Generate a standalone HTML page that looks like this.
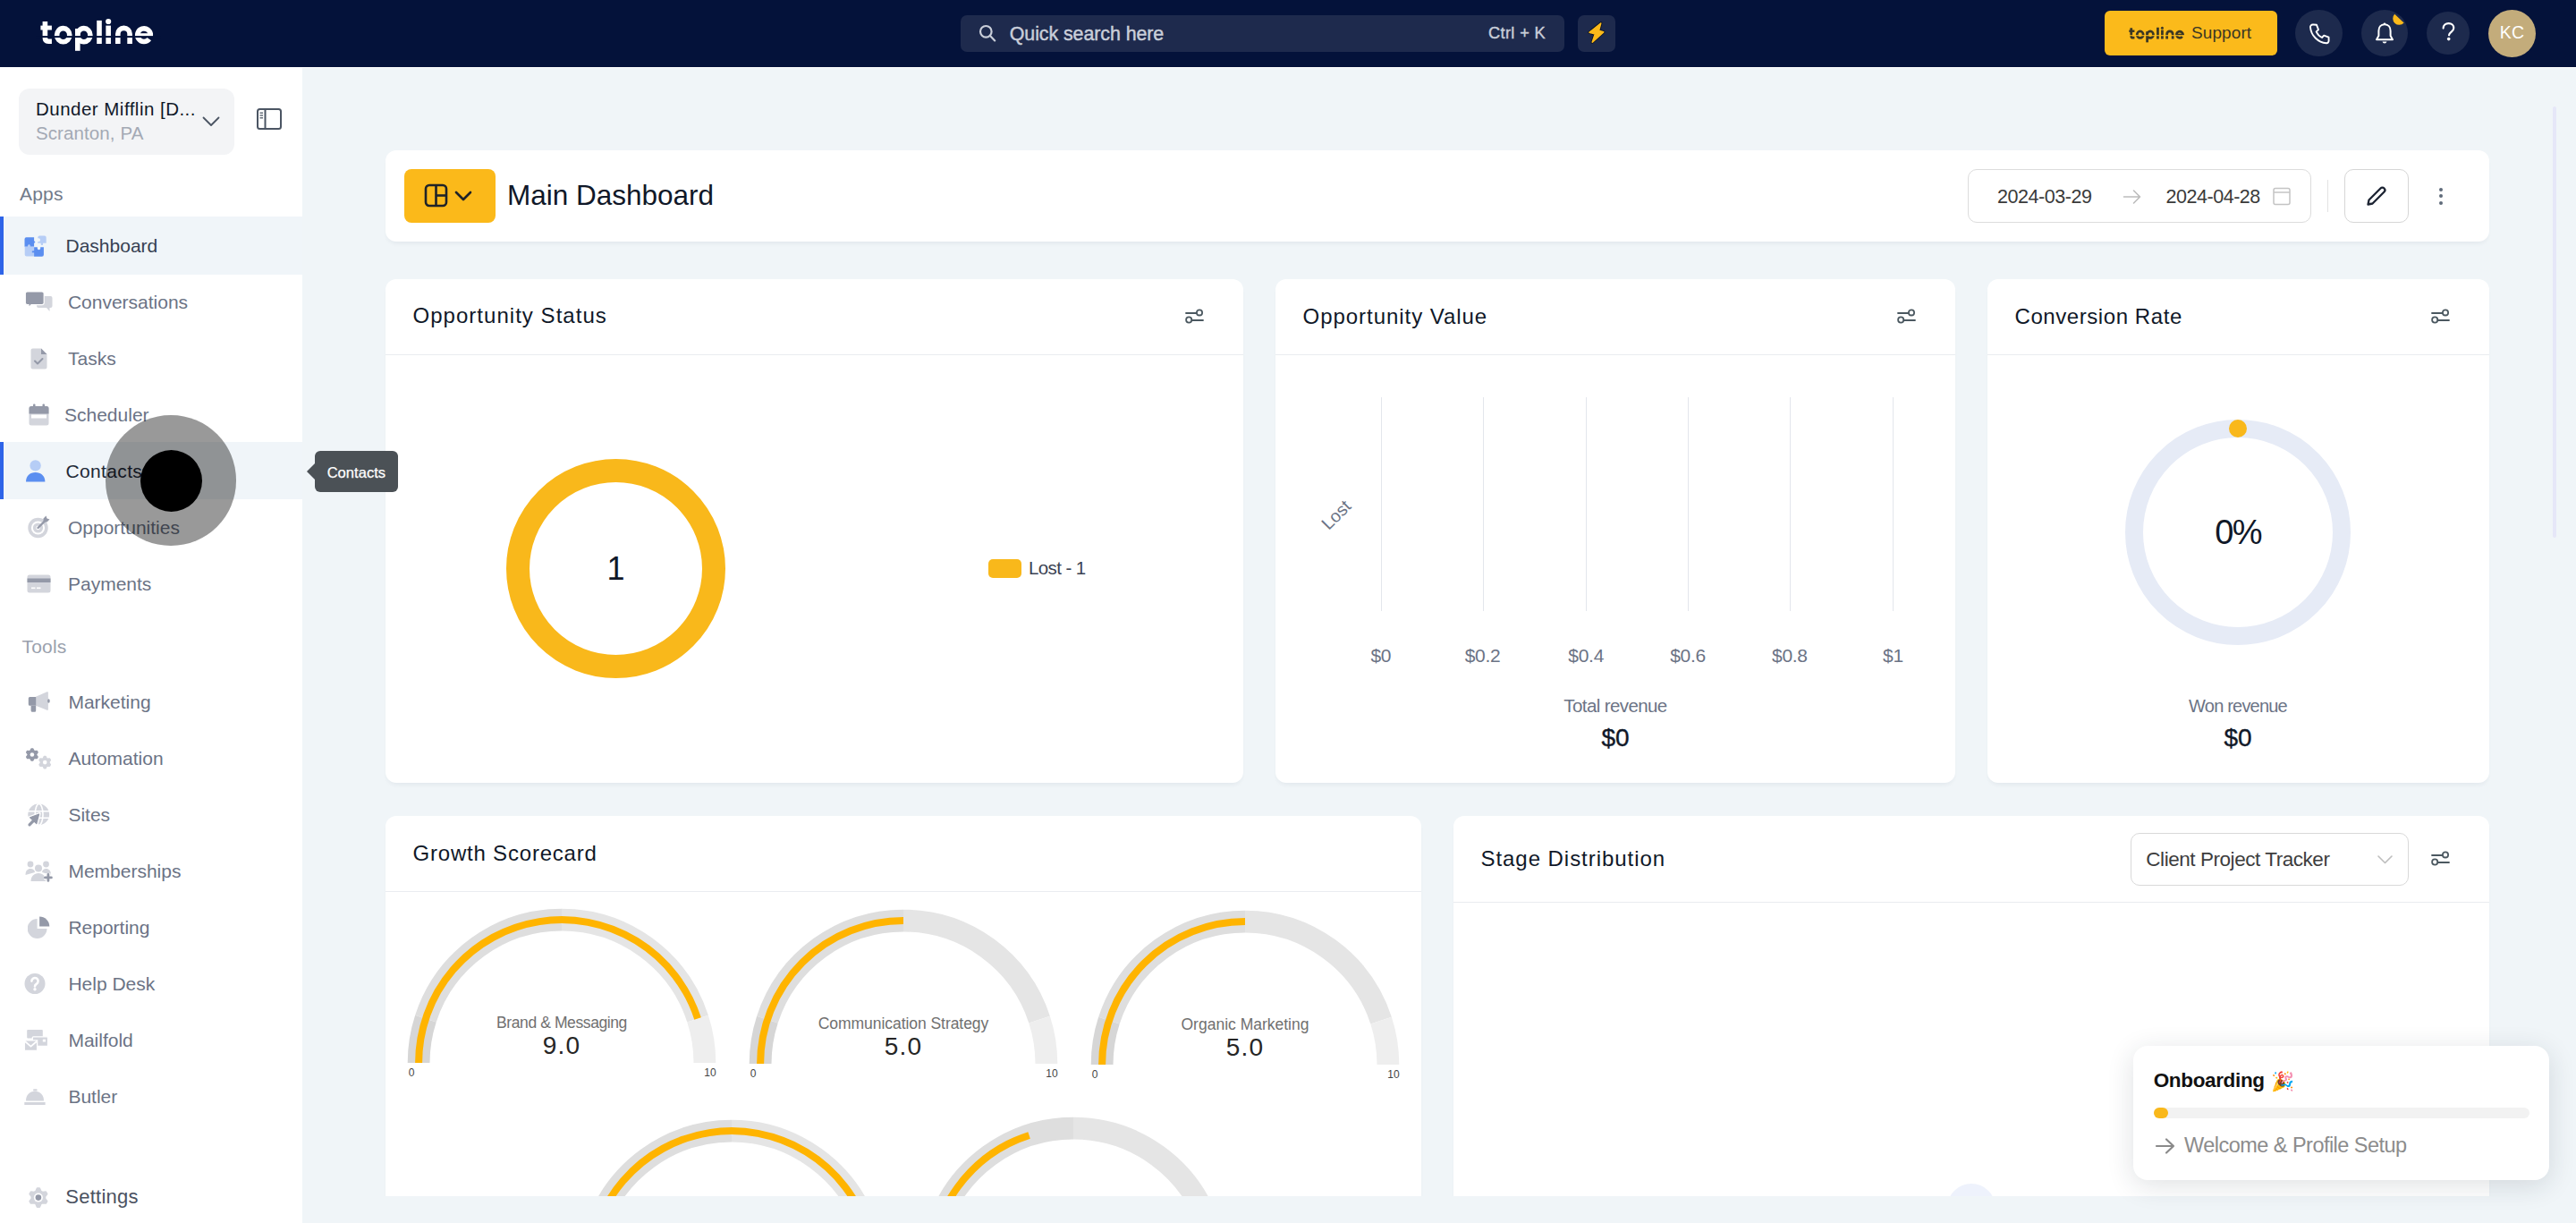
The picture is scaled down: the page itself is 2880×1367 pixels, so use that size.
<!DOCTYPE html>
<html><head><meta charset="utf-8"><style>
html,body{margin:0;padding:0;}
body{width:2880px;height:1367px;overflow:hidden;position:relative;background:#f0f5f8;font-family:"Liberation Sans",sans-serif;}
.t{position:absolute;white-space:nowrap;}
.b{position:absolute;}
</style></head><body>
<div class="b" style="left:0px;top:0px;width:2880px;height:75px;background:#04123a"></div>
<svg class="b" style="left:40px;top:15px" width="140" height="50" viewBox="0 0 140 50"><g transform="translate(-40,-15)"><g fill="none" stroke="#fff" stroke-width="5.6"><path d="M50.4 24 V42.6 Q50.4 46.2 54 46.2 H57.9"/><ellipse cx="70.7" cy="39.2" rx="7.1" ry="7.6"/><ellipse cx="93.8" cy="39.2" rx="7.1" ry="7.6"/><path d="M86.8 32 V56.8"/><path d="M111 22.9 V49"/><path d="M121.15 28.6 V49"/><path d="M131.8 49 V38 A6.65 6.65 0 0 1 145.1 38 V49"/><path d="M168.3 39.2 A7.3 7.3 0 1 0 166.8 43.6"/><path d="M153 39.4 H171" stroke-width="4.4"/></g><g fill="#fff"><rect x="45.4" y="28.6" width="12.5" height="4.9"/><circle cx="121.15" cy="24" r="3.1"/></g><rect x="40" y="40.1" width="140" height="2" fill="#04123a"/></g></svg>
<div class="b" style="left:1074px;top:17px;width:675px;height:41px;background:#1e2a4d;border-radius:7px"></div>
<svg class="b" style="left:1094px;top:27px" width="22" height="22" viewBox="0 0 22 22"><circle cx="8.3" cy="8.3" r="6.3" fill="none" stroke="#c9ced9" stroke-width="2.2"/><line x1="13" y1="13" x2="18.2" y2="18.4" stroke="#c9ced9" stroke-width="2.2" stroke-linecap="round"/></svg>
<div class="t" style="left:1128.80px;top:27.88px;font-size:21.4px;line-height:21.4px;color:#c9ced9;font-weight:400;letter-spacing:-0.07px;-webkit-text-stroke:0.45px #c9ced9;">Quick search here</div>
<div class="t" style="right:1152.00px;text-align:right;top:28.49px;font-size:18.2px;line-height:18.2px;color:#c9ced9;font-weight:400;letter-spacing:0.35px;-webkit-text-stroke:0.4px #c9ced9;">Ctrl + K</div>
<div class="b" style="left:1764px;top:17px;width:42px;height:41px;background:#1e2a4d;border-radius:7px"></div>
<svg class="b" style="left:1770px;top:20px" width="30" height="34" viewBox="0 0 30 34"><path d="M19.7 6 L7.1 16.2 L13.3 18.1 L10.3 27.1 L22.7 15.8 L17.5 14.3 Z" fill="#0b1226" stroke="#0b1226" stroke-width="3.4" stroke-linejoin="round"/><path d="M19.7 6 L7.1 16.2 L13.3 18.1 L10.3 27.1 L22.7 15.8 L17.5 14.3 Z" fill="#fbb91a" stroke="#fbb91a" stroke-width="1.6" stroke-linejoin="round"/></svg>
<div class="b" style="left:2353px;top:12px;width:193px;height:50px;background:#fbba1b;border-radius:6px"></div>
<svg class="b" style="left:2376px;top:26px" width="72" height="24" viewBox="0 0 72 24"><g transform="translate(4.3,3.8) scale(0.49) translate(-45.4,-21)"><g fill="none" stroke="#3b3724" stroke-width="5.6"><path d="M50.4 24 V42.6 Q50.4 46.2 54 46.2 H57.9"/><ellipse cx="70.7" cy="39.2" rx="7.1" ry="7.6"/><ellipse cx="93.8" cy="39.2" rx="7.1" ry="7.6"/><path d="M86.8 32 V56.8"/><path d="M111 22.9 V49"/><path d="M121.15 28.6 V49"/><path d="M131.8 49 V38 A6.65 6.65 0 0 1 145.1 38 V49"/><path d="M168.3 39.2 A7.3 7.3 0 1 0 166.8 43.6"/><path d="M153 39.4 H171" stroke-width="4.4"/></g><g fill="#3b3724"><rect x="45.4" y="28.6" width="12.5" height="4.9"/><circle cx="121.15" cy="24" r="3.1"/></g><rect x="40" y="40.1" width="140" height="2.2" fill="#fbba1b"/></g></svg>
<div class="t" style="left:2450.00px;top:27.02px;font-size:19px;line-height:19px;color:#3b3724;font-weight:400;letter-spacing:0.1px;">Support</div>
<div class="b" style="left:2566.3px;top:10.8px;width:52.4px;height:52.4px;border-radius:50%;background:#1d2a4d"></div>
<div class="b" style="left:2640px;top:11px;width:52px;height:52px;border-radius:50%;background:#1d2a4d"></div>
<div class="b" style="left:2712.8px;top:12.599999999999998px;width:48.4px;height:48.4px;border-radius:50%;background:#1d2a4d"></div>
<svg class="b" style="left:2580px;top:25px" width="26" height="26" viewBox="0 0 26 26"><path d="M6.5 2.5 L10 2.8 L12 8.2 L9.6 10.4 C11 13.4 13 15.6 16 17 L18.2 14.6 L23.5 16.6 L23.6 20.6 C23.6 22 22.4 23.4 21 23.3 C11.6 22.6 3.6 14.6 3 5.2 C2.9 3.8 4.2 2.5 5.6 2.5 Z" fill="none" stroke="#ffffff" stroke-width="1.9" stroke-linejoin="round"/></svg>
<svg class="b" style="left:2653px;top:24px" width="26" height="28" viewBox="0 0 26 28"><path d="M13 3.2 C8.6 3.2 6.4 6.6 6.4 10.6 V16 L4 20.2 H22 L19.6 16 V10.6 C19.6 6.6 17.4 3.2 13 3.2 Z" fill="none" stroke="#ffffff" stroke-width="2" stroke-linejoin="round"/><path d="M10.5 22.6 A2.6 2.6 0 0 0 15.5 22.6 Z" fill="#ffffff"/><circle cx="13" cy="2.6" r="1.2" fill="#fff"/></svg>
<svg class="b" style="left:2674px;top:13px" width="16" height="16" viewBox="0 0 16 16"><path d="M3.2 2.8 L13.6 12.6 A6.2 6.2 0 0 1 3.2 2.8 Z" fill="#fbb91a" transform="rotate(0)"/></svg>
<svg class="b" style="left:2725px;top:20px" width="26" height="30" viewBox="0 0 26 30"><path d="M6.6 11.6 C6.6 8.2 9.2 6.1 12.6 6.1 C16 6.1 18.3 8.3 18.3 11.3 C18.3 14.4 15.2 15.4 13.7 17.6 L13 19.3" fill="none" stroke="#fff" stroke-width="2.1" stroke-linecap="round"/><circle cx="12.7" cy="23.6" r="1.8" fill="#fff"/></svg>
<div class="b" style="left:2781.5px;top:10.5px;width:53px;height:53px;border-radius:50%;background:#c3ac7b"></div>
<div class="t" style="left:2208.50px;width:1200px;text-align:center;top:26.99px;font-size:19.5px;line-height:19.5px;color:#ffffff;font-weight:400;letter-spacing:0.2px;">KC</div>
<div class="b" style="left:0px;top:75px;width:338px;height:1292px;background:#ffffff"></div>
<div class="b" style="left:338px;top:74.5px;width:2542px;height:1.5px;background:#ffffff"></div>
<div class="b" style="left:21px;top:99px;width:241px;height:74px;background:#f3f4f6;border-radius:12px"></div>
<div class="t" style="left:40.00px;top:112.45px;font-size:20.5px;line-height:20.5px;color:#101828;font-weight:400;letter-spacing:0.48px;">Dunder Mifflin [D...</div>
<div class="t" style="left:40.00px;top:139.25px;font-size:20.5px;line-height:20.5px;color:#a3a9b4;font-weight:400;letter-spacing:0.1px;">Scranton, PA</div>
<svg class="b" style="left:224px;top:128px" width="24" height="16" viewBox="0 0 24 16"><path d="M3.5 3.5 L12 12 L20.5 3.5" fill="none" stroke="#4b5563" stroke-width="1.8" stroke-linecap="round" stroke-linejoin="round"/></svg>
<svg class="b" style="left:285px;top:119px" width="32" height="28" viewBox="0 0 32 28"><rect x="3" y="3" width="26" height="22" rx="2.5" fill="none" stroke="#4b5563" stroke-width="2"/><line x1="11.5" y1="3" x2="11.5" y2="25" stroke="#4b5563" stroke-width="2"/><line x1="5.5" y1="7.2" x2="9" y2="7.2" stroke="#4b5563" stroke-width="1.3"/><line x1="5.5" y1="10" x2="9" y2="10" stroke="#4b5563" stroke-width="1.3"/><line x1="5.5" y1="12.8" x2="9" y2="12.8" stroke="#4b5563" stroke-width="1.3"/></svg>
<div class="t" style="left:22.00px;top:205.82px;font-size:21px;line-height:21px;color:#717a8a;font-weight:400;letter-spacing:0.2px;">Apps</div>
<div class="b" style="left:0px;top:242px;width:338px;height:64.5px;background:#f0f5f9"></div>
<div class="b" style="left:0px;top:242px;width:4px;height:64.5px;background:#2e64e8"></div>
<div class="b" style="left:0px;top:494px;width:338px;height:64px;background:#f0f5f9"></div>
<div class="b" style="left:0px;top:494px;width:4px;height:64px;background:#2e64e8"></div>
<svg class="b" style="left:24px;top:259px" width="32" height="32" viewBox="0 0 32 32"><path d="M3.5 8.3 a2 2 0 0 1 2-2 h8.6 v4.2 h0.4 a1.1 1.1 0 0 1 0 2.1 h-0.4 v4.2 h-4.7 v-1.3 a1 1 0 0 0 -2 0 v1.3 h-3.9 Z" fill="#5b8ef0"/><path d="M3.7 16.8 h3.9 v-1.3 a1 1 0 0 1 2 0 v1.3 h4.5 v4.4 h-1.3 a1.2 1.2 0 0 0 0 2.4 h1.3 v3.9 h-8.4 a2 2 0 0 1-2-2 Z" fill="#b6cdf6"/><path d="M18.3 6.5 a2 2 0 0 1 2-2 h5.4 a2 2 0 0 1 2 2 v6.3 h-3.6 v1.1 a1.2 1.2 0 0 1 -2.4 0 v-1.1 h-3.4 v-1.8 h0.9 a1.8 1.8 0 0 0 0-3.7 h-0.9 Z" fill="#b6cdf6"/><path d="M14.1 17.3 h3.7 v1.2 a1.7 1.7 0 0 0 3.4 0 v-1.2 h3.7 v8.4 a2 2 0 0 1-2 2 h-8.8 v-4.1 h-1.3 a1.2 1.2 0 0 1 0-2.4 h1.3 Z" fill="#5b8ef0"/></svg>
<svg class="b" style="left:28px;top:325px" width="32" height="25" viewBox="0 0 32 25"><path d="M13 6 h15.5 a2 2 0 0 1 2 2 v9 a2 2 0 0 1-2 2 h-1 l-0 4 l-3.5-4 h-9 a2 2 0 0 1-2-2 Z" fill="#d3d5dc"/><path d="M2.5 1 h16.5 a2.2 2.2 0 0 1 2.2 2.2 v10.2 a2.2 2.2 0 0 1-2.2 2.2 h-12 l-3 3.2 v-3.2 h-1.5 a2.2 2.2 0 0 1-2.2-2.2 v-10.2 a2.2 2.2 0 0 1 2.2-2.2 Z" fill="#9499a8" stroke="#fff" stroke-width="1.2"/></svg>
<svg class="b" style="left:34px;top:389px" width="19" height="24" viewBox="0 0 19 24"><path d="M2.5 0.5 h9.5 l6.5 6.5 v14.5 a2 2 0 0 1-2 2 h-14 a2 2 0 0 1-2-2 v-19 a2 2 0 0 1 2-2 Z" fill="#d3d5dc"/><path d="M12 0.5 l6.5 6.5 h-6.5 Z" fill="#9499a8"/><path d="M5 14.5 l3 3 l5.5-5.5" fill="none" stroke="#9499a8" stroke-width="2" stroke-linecap="round" stroke-linejoin="round"/></svg>
<svg class="b" style="left:32px;top:451px" width="23" height="25" viewBox="0 0 23 25"><rect x="0.5" y="3" width="22" height="21.5" rx="2.5" fill="#d3d5dc"/><path d="M0.5 5.5 a2.5 2.5 0 0 1 2.5-2.5 h17 a2.5 2.5 0 0 1 2.5 2.5 v6 h-22 Z" fill="#9499a8"/><rect x="5" y="0.5" width="2.5" height="5" rx="1" fill="#9499a8"/><rect x="15.5" y="0.5" width="2.5" height="5" rx="1" fill="#9499a8"/><rect x="3" y="12.5" width="17" height="4" fill="#fff"/></svg>
<svg class="b" style="left:28px;top:513px" width="24" height="27" viewBox="0 0 24 27"><circle cx="11.6" cy="7.4" r="6.2" fill="#b6cdf6"/><path d="M1 25.5 C1 19 5.6 15 11.6 15 C17.6 15 22.4 19 22.4 25.5 Z" fill="#5b8ef0"/></svg>
<svg class="b" style="left:31px;top:576px" width="25" height="26" viewBox="0 0 25 26"><circle cx="11.5" cy="14" r="11.2" fill="#d3d5dc"/><circle cx="11.5" cy="14" r="7.6" fill="#fff"/><circle cx="11.5" cy="14" r="5.6" fill="#d3d5dc"/><circle cx="11.5" cy="14" r="2.2" fill="#fff"/><path d="M11.5 14 L20 5.5" stroke="#9499a8" stroke-width="2.4" stroke-linecap="round"/><path d="M17.5 3.5 L20.5 0.5 L21.5 3.5 L24.5 4.5 L21.5 7.5 L17.5 7.5 Z" fill="#9499a8"/></svg>
<svg class="b" style="left:30px;top:642px" width="27" height="21" viewBox="0 0 27 21"><rect x="0.5" y="0.5" width="26" height="20" rx="2.5" fill="#d3d5dc"/><rect x="0.5" y="4.5" width="26" height="4.5" fill="#9499a8"/><rect x="5" y="14.5" width="4.5" height="1.6" fill="#fff"/><rect x="11" y="14.5" width="4.5" height="1.6" fill="#fff"/></svg>
<svg class="b" style="left:30px;top:772px" width="27" height="25" viewBox="0 0 27 25"><path d="M10 6.8 L22.6 1.3 Q23.9 0.9 23.9 2.4 V20.8 Q23.9 22.3 22.6 21.8 L10 16.8 Z" fill="#d3d5dc"/><path d="M3.3 6.9 H10.2 V16.8 H3.3 A1.5 1.5 0 0 1 1.8 15.3 V8.4 A1.5 1.5 0 0 1 3.3 6.9 Z" fill="#9499a8"/><path d="M4.6 16.8 H10.2 V22.2 A1.5 1.5 0 0 1 8.7 23.7 H6.1 A1.5 1.5 0 0 1 4.6 22.2 Z" fill="#9499a8"/><ellipse cx="24.4" cy="11.5" rx="1.3" ry="2.3" fill="#9499a8"/></svg>
<svg class="b" style="left:26px;top:834px" width="32" height="28" viewBox="0 0 32 28"><polygon points="9.04,2.96 10.76,2.96 11.72,5.11 12.79,5.73 15.14,5.48 16.00,6.97 14.61,8.88 14.61,10.12 16.00,12.03 15.14,13.52 12.79,13.27 11.72,13.89 10.76,16.04 9.04,16.04 8.08,13.89 7.01,13.27 4.66,13.52 3.80,12.03 5.19,10.12 5.19,8.88 3.80,6.97 4.66,5.48 7.01,5.73 8.08,5.11" fill="#9499a8" stroke="#9499a8" stroke-width="1.6" stroke-linejoin="round"/><circle cx="9.9" cy="9.5" r="2.3" fill="#fff"/><polygon points="23.34,11.56 25.06,11.56 26.02,13.71 27.09,14.33 29.44,14.08 30.30,15.57 28.91,17.48 28.91,18.72 30.30,20.63 29.44,22.12 27.09,21.87 26.02,22.49 25.06,24.64 23.34,24.64 22.38,22.49 21.31,21.87 18.96,22.12 18.10,20.63 19.49,18.72 19.49,17.48 18.10,15.57 18.96,14.08 21.31,14.33 22.38,13.71" fill="#d3d5dc" stroke="#d3d5dc" stroke-width="1.6" stroke-linejoin="round"/><circle cx="24.2" cy="18.1" r="2.3" fill="#fff"/></svg>
<svg class="b" style="left:28px;top:895px" width="30" height="30" viewBox="0 0 30 30"><circle cx="15.2" cy="15.4" r="11.9" fill="#d3d5dc"/><ellipse cx="15.6" cy="15.4" rx="4.4" ry="11.9" fill="none" stroke="#fff" stroke-width="1.6"/><path d="M3 11.8 H27.5 M3 19.3 H27.5" stroke="#fff" stroke-width="1.6"/><path d="M16.4 14.2 L3.8 18.9 L13.2 26.9 Z" fill="#fff" stroke="#fff" stroke-width="2.6" stroke-linejoin="round"/><path d="M10.4 21.4 L4.6 27.2" stroke="#fff" stroke-width="5.6" stroke-linecap="round"/><path d="M15.6 15 L5.6 18.8 L12.8 25.6 Z" fill="#9499a8" stroke="#9499a8" stroke-width="1.2" stroke-linejoin="round"/><path d="M10.2 21.6 L5 26.8" stroke="#9499a8" stroke-width="3.2" stroke-linecap="round"/></svg>
<svg class="b" style="left:28px;top:961px" width="31" height="26" viewBox="0 0 31 26"><circle cx="6" cy="5" r="3.4" fill="#d3d5dc"/><circle cx="23.5" cy="5" r="3.4" fill="#d3d5dc"/><circle cx="15" cy="9.5" r="4" fill="#d3d5dc"/><path d="M0.5 17 C0.5 12 3 10 6 10 C9 10 11 12 11 14 Z" fill="#d3d5dc"/><path d="M6.5 24 C6.5 18.5 10 15 15 15 C20 15 23.5 18.5 23.5 24 Z" fill="#d3d5dc"/><path d="M19 14 C19 12 21 10 23.5 10 C26.5 10 29 12 29 17 Z" fill="#d3d5dc"/><path d="M25.9 15.2 V24.6 M21.2 19.9 H30.6" stroke="#fff" stroke-width="5.4"/><path d="M25.9 16.4 V23.4 M22.4 19.9 H29.4" stroke="#9499a8" stroke-width="2.8" stroke-linecap="round"/></svg>
<svg class="b" style="left:31px;top:1024px" width="26" height="26" viewBox="0 0 26 26"><path d="M10.6 3.1 A10.9 10.9 0 1 0 21.5 14 H10.6 Z" fill="#d3d5dc"/><path d="M13.1 0.4 A11.2 11.2 0 0 1 24.3 11.6 H13.1 Z" fill="#9499a8"/></svg>
<svg class="b" style="left:27px;top:1087px" width="25" height="25" viewBox="0 0 25 25"><circle cx="12" cy="12.5" r="11.5" fill="#d3d5dc"/><path d="M8.4 9.6 a3.6 3.6 0 1 1 5.6 3 c-1.4 0.9-2 1.4-2 2.8" fill="none" stroke="#fff" stroke-width="2.6" stroke-linecap="round"/><circle cx="12" cy="18.8" r="1.7" fill="#fff"/></svg>
<svg class="b" style="left:26px;top:1150px" width="29" height="26" viewBox="0 0 29 26"><rect x="4.2" y="1" width="17.6" height="9.5" rx="1" fill="#d3d5dc"/><rect x="10.3" y="8.8" width="17.2" height="10.6" rx="1" fill="#d3d5dc" stroke="#fff" stroke-width="1.3"/><rect x="21.8" y="11.7" width="3.2" height="2.8" fill="#fff"/><path d="M1.3 12.9 H15.6 V23.4 a1 1 0 0 1-1 1 H2.3 a1 1 0 0 1-1-1 Z" fill="#d3d5dc" stroke="#fff" stroke-width="1.3"/><path d="M1.6 13.8 L8.5 19.6 L15.3 13.8" fill="none" stroke="#fff" stroke-width="1.8"/></svg>
<svg class="b" style="left:26px;top:1215px" width="26" height="21" viewBox="0 0 26 21"><path d="M3 15.4 C3 9 7 4.8 13 4.8 C19 4.8 23 9 23 15.4 Z" fill="#d3d5dc"/><rect x="11.1" y="2.3" width="4.5" height="2.2" rx="0.8" fill="#d3d5dc"/><rect x="1.3" y="17" width="23.3" height="3" fill="#d3d5dc"/></svg>
<svg class="b" style="left:31px;top:1326px" width="25" height="26" viewBox="0 0 25 26"><polygon points="10.52,2.09 13.28,2.09 14.82,5.55 16.55,6.55 20.31,6.15 21.69,8.54 19.47,11.60 19.47,13.60 21.69,16.66 20.31,19.05 16.55,18.65 14.82,19.65 13.28,23.11 10.52,23.11 8.98,19.65 7.25,18.65 3.49,19.05 2.11,16.66 4.33,13.60 4.33,11.60 2.11,8.54 3.49,6.15 7.25,6.55 8.98,5.55" fill="#d3d5dc" stroke="#d3d5dc" stroke-width="1.6" stroke-linejoin="round"/><circle cx="11.9" cy="12.6" r="5.0" fill="#fff"/><circle cx="11.9" cy="12.6" r="3.3" fill="#9499a8"/></svg>
<div class="t" style="left:73.50px;top:264.02px;font-size:21px;line-height:21px;color:#364152;font-weight:400;letter-spacing:0px;">Dashboard</div>
<div class="t" style="left:75.90px;top:327.22px;font-size:21px;line-height:21px;color:#6b7385;font-weight:400;letter-spacing:0px;">Conversations</div>
<div class="t" style="left:76.00px;top:390.22px;font-size:21px;line-height:21px;color:#6b7385;font-weight:400;letter-spacing:0px;">Tasks</div>
<div class="t" style="left:72.00px;top:453.22px;font-size:21px;line-height:21px;color:#6b7385;font-weight:400;letter-spacing:0px;">Scheduler</div>
<div class="t" style="left:73.50px;top:516.12px;font-size:21px;line-height:21px;color:#1f2937;font-weight:400;letter-spacing:0.35px;">Contacts</div>
<div class="t" style="left:76.00px;top:579.22px;font-size:21px;line-height:21px;color:#6b7385;font-weight:400;letter-spacing:0px;">Opportunities</div>
<div class="t" style="left:76.00px;top:642.22px;font-size:21px;line-height:21px;color:#6b7385;font-weight:400;letter-spacing:0px;">Payments</div>
<div class="t" style="left:24.50px;top:711.82px;font-size:21px;line-height:21px;color:#9aa1ad;font-weight:400;letter-spacing:0.2px;">Tools</div>
<div class="t" style="left:76.40px;top:773.92px;font-size:21px;line-height:21px;color:#6b7385;font-weight:400;letter-spacing:0px;">Marketing</div>
<div class="t" style="left:76.40px;top:836.92px;font-size:21px;line-height:21px;color:#6b7385;font-weight:400;letter-spacing:0px;">Automation</div>
<div class="t" style="left:76.40px;top:899.92px;font-size:21px;line-height:21px;color:#6b7385;font-weight:400;letter-spacing:0px;">Sites</div>
<div class="t" style="left:76.40px;top:962.92px;font-size:21px;line-height:21px;color:#6b7385;font-weight:400;letter-spacing:0px;">Memberships</div>
<div class="t" style="left:76.40px;top:1025.92px;font-size:21px;line-height:21px;color:#6b7385;font-weight:400;letter-spacing:0px;">Reporting</div>
<div class="t" style="left:76.40px;top:1088.92px;font-size:21px;line-height:21px;color:#6b7385;font-weight:400;letter-spacing:0px;">Help Desk</div>
<div class="t" style="left:76.40px;top:1151.92px;font-size:21px;line-height:21px;color:#6b7385;font-weight:400;letter-spacing:0px;">Mailfold</div>
<div class="t" style="left:76.40px;top:1214.92px;font-size:21px;line-height:21px;color:#6b7385;font-weight:400;letter-spacing:0px;">Butler</div>
<div class="t" style="left:73.30px;top:1327.08px;font-size:22px;line-height:22px;color:#4b5261;font-weight:400;letter-spacing:0.25px;">Settings</div>
<div class="b" style="left:431px;top:168px;width:2352px;height:102px;background:#ffffff;border-radius:12px;box-shadow:0 4px 5px -2px rgba(40,60,80,0.07)"></div>
<div class="b" style="left:452px;top:189px;width:102px;height:60px;background:#fbb91a;border-radius:8px"></div>
<svg class="b" style="left:474px;top:205px" width="27" height="27" viewBox="0 0 27 27"><rect x="2" y="2" width="23" height="23" rx="4" fill="none" stroke="#1f2328" stroke-width="2.6"/><line x1="13.5" y1="2" x2="13.5" y2="25" stroke="#1f2328" stroke-width="2.6"/><line x1="13.5" y1="13.5" x2="25" y2="13.5" stroke="#1f2328" stroke-width="2.6"/></svg>
<svg class="b" style="left:507px;top:212px" width="22" height="14" viewBox="0 0 22 14"><path d="M3 3 L11 11 L19 3" fill="none" stroke="#1f2328" stroke-width="2.6" stroke-linecap="round" stroke-linejoin="round"/></svg>
<div class="t" style="left:567.00px;top:203.34px;font-size:31.5px;line-height:31.5px;color:#101828;font-weight:400;letter-spacing:0px;">Main Dashboard</div>
<div class="b" style="left:2200px;top:189px;width:384px;height:60px;background:#fff;border:1.5px solid #dcdcdc;border-radius:10px;box-sizing:border-box"></div>
<div class="t" style="left:2233.00px;top:210.00px;font-size:21.5px;line-height:21.5px;color:#3a3a3a;font-weight:400;letter-spacing:-0.45px;">2024-03-29</div>
<svg class="b" style="left:2372px;top:210px" width="24" height="20" viewBox="0 0 24 20"><path d="M2.5 10 H20.5 M13.5 3 L20.5 10 L13.5 17" fill="none" stroke="#bcbcbc" stroke-width="1.6" stroke-linecap="round" stroke-linejoin="round"/></svg>
<div class="t" style="left:2421.40px;top:210.00px;font-size:21.5px;line-height:21.5px;color:#3a3a3a;font-weight:400;letter-spacing:-0.45px;">2024-04-28</div>
<svg class="b" style="left:2540px;top:209px" width="22" height="21" viewBox="0 0 22 21"><rect x="2" y="1.5" width="18" height="18" rx="2" fill="none" stroke="#c4c4c4" stroke-width="1.5"/><line x1="2" y1="6" x2="20" y2="6" stroke="#c4c4c4" stroke-width="1.5"/></svg>
<div class="b" style="left:2602px;top:201px;width:1px;height:36px;background:#e3e3e3"></div>
<div class="b" style="left:2621px;top:189px;width:72px;height:60px;background:#fff;border:1.5px solid #d6d6d6;border-radius:10px;box-sizing:border-box"></div>
<svg class="b" style="left:2643px;top:206px" width="27" height="27" viewBox="0 0 27 27"><path d="M4.5 22.5 L5.5 17.5 L18.5 4.5 a2.8 2.8 0 0 1 4 4 L9.5 21.5 Z" fill="none" stroke="#1d2433" stroke-width="2.3" stroke-linejoin="round"/></svg>
<div class="b" style="left:2726.5px;top:209.5px;width:4.4px;height:4.4px;border-radius:50%;background:#5f6b7a"></div>
<div class="b" style="left:2726.5px;top:217.0px;width:4.4px;height:4.4px;border-radius:50%;background:#5f6b7a"></div>
<div class="b" style="left:2726.5px;top:224.5px;width:4.4px;height:4.4px;border-radius:50%;background:#5f6b7a"></div>
<div class="b" style="left:431px;top:312px;width:959px;height:563px;background:#ffffff;border-radius:12px;box-shadow:0 4px 5px -2px rgba(40,60,80,0.07)"></div>
<div class="b" style="left:431px;top:396px;width:959px;height:1.1999999999999886px;background:#eaecf0"></div>
<div class="t" style="left:461.50px;top:341.48px;font-size:24px;line-height:24px;color:#101828;font-weight:400;letter-spacing:1.03px;">Opportunity Status</div>
<svg class="b" style="left:1325px;top:345px" width="22" height="18" viewBox="0 0 22 18"><line x1="1" y1="5" x2="12.5" y2="5" stroke="#4b5860" stroke-width="1.8" stroke-linecap="round"/><circle cx="16" cy="4.4" r="3.1" fill="none" stroke="#4b5860" stroke-width="1.8"/><circle cx="4.2" cy="12.5" r="3.1" fill="none" stroke="#4b5860" stroke-width="1.8"/><line x1="7.5" y1="13" x2="20" y2="13" stroke="#4b5860" stroke-width="1.8" stroke-linecap="round"/></svg>
<div class="b" style="left:1426px;top:312px;width:760px;height:563px;background:#ffffff;border-radius:12px;box-shadow:0 4px 5px -2px rgba(40,60,80,0.07)"></div>
<div class="b" style="left:1426px;top:396px;width:760px;height:1.1999999999999886px;background:#eaecf0"></div>
<div class="t" style="left:1456.50px;top:341.68px;font-size:24px;line-height:24px;color:#101828;font-weight:400;letter-spacing:0.96px;">Opportunity Value</div>
<svg class="b" style="left:2121px;top:345px" width="22" height="18" viewBox="0 0 22 18"><line x1="1" y1="5" x2="12.5" y2="5" stroke="#4b5860" stroke-width="1.8" stroke-linecap="round"/><circle cx="16" cy="4.4" r="3.1" fill="none" stroke="#4b5860" stroke-width="1.8"/><circle cx="4.2" cy="12.5" r="3.1" fill="none" stroke="#4b5860" stroke-width="1.8"/><line x1="7.5" y1="13" x2="20" y2="13" stroke="#4b5860" stroke-width="1.8" stroke-linecap="round"/></svg>
<div class="b" style="left:2222px;top:312px;width:561px;height:563px;background:#ffffff;border-radius:12px;box-shadow:0 4px 5px -2px rgba(40,60,80,0.07)"></div>
<div class="b" style="left:2222px;top:396px;width:561px;height:1.1999999999999886px;background:#eaecf0"></div>
<div class="t" style="left:2252.50px;top:341.68px;font-size:24px;line-height:24px;color:#101828;font-weight:400;letter-spacing:0.57px;">Conversion Rate</div>
<svg class="b" style="left:2718px;top:345px" width="22" height="18" viewBox="0 0 22 18"><line x1="1" y1="5" x2="12.5" y2="5" stroke="#4b5860" stroke-width="1.8" stroke-linecap="round"/><circle cx="16" cy="4.4" r="3.1" fill="none" stroke="#4b5860" stroke-width="1.8"/><circle cx="4.2" cy="12.5" r="3.1" fill="none" stroke="#4b5860" stroke-width="1.8"/><line x1="7.5" y1="13" x2="20" y2="13" stroke="#4b5860" stroke-width="1.8" stroke-linecap="round"/></svg>
<div class="b" style="left:566px;top:512.5px;width:245px;height:245px;border-radius:50%;box-sizing:border-box;border:26.5px solid #f9b81b"></div>
<div class="t" style="left:88.50px;width:1200px;text-align:center;top:618.13px;font-size:36px;line-height:36px;color:#101828;font-weight:400;letter-spacing:0px;">1</div>
<div class="b" style="left:1105px;top:625px;width:37px;height:21px;background:#f9b81b;border-radius:5px"></div>
<div class="t" style="left:1150.00px;top:625.15px;font-size:20.5px;line-height:20.5px;color:#3b4252;font-weight:400;letter-spacing:-0.6px;">Lost - 1</div>
<div class="b" style="left:1544px;top:444px;width:1px;height:239px;background:#e3e6ec"></div>
<div class="b" style="left:1658px;top:444px;width:1px;height:239px;background:#e3e6ec"></div>
<div class="b" style="left:1773px;top:444px;width:1px;height:239px;background:#e3e6ec"></div>
<div class="b" style="left:1887px;top:444px;width:1px;height:239px;background:#e3e6ec"></div>
<div class="b" style="left:2001px;top:444px;width:1px;height:239px;background:#e3e6ec"></div>
<div class="b" style="left:2116px;top:444px;width:1px;height:239px;background:#e3e6ec"></div>
<div class="t" style="left:943.80px;width:1200px;text-align:center;top:722.22px;font-size:21px;line-height:21px;color:#6b7385;font-weight:400;letter-spacing:-0.3px;">$0</div>
<div class="t" style="left:1057.50px;width:1200px;text-align:center;top:722.22px;font-size:21px;line-height:21px;color:#6b7385;font-weight:400;letter-spacing:-0.3px;">$0.2</div>
<div class="t" style="left:1173.20px;width:1200px;text-align:center;top:722.22px;font-size:21px;line-height:21px;color:#6b7385;font-weight:400;letter-spacing:-0.3px;">$0.4</div>
<div class="t" style="left:1287.00px;width:1200px;text-align:center;top:722.22px;font-size:21px;line-height:21px;color:#6b7385;font-weight:400;letter-spacing:-0.3px;">$0.6</div>
<div class="t" style="left:1400.90px;width:1200px;text-align:center;top:722.22px;font-size:21px;line-height:21px;color:#6b7385;font-weight:400;letter-spacing:-0.3px;">$0.8</div>
<div class="t" style="left:1516.50px;width:1200px;text-align:center;top:722.22px;font-size:21px;line-height:21px;color:#6b7385;font-weight:400;letter-spacing:-0.3px;">$1</div>
<div class="t" style="transform:rotate(-45deg);left:896.50px;width:1200px;text-align:center;top:565.49px;font-size:19.5px;line-height:19.5px;color:#6b7385;font-weight:400;letter-spacing:0px;transform-origin:50% 70%;">Lost</div>
<div class="t" style="left:1206.00px;width:1200px;text-align:center;top:779.05px;font-size:20.5px;line-height:20.5px;color:#6b7385;font-weight:400;letter-spacing:-0.6px;">Total revenue</div>
<div class="t" style="left:1206.00px;width:1200px;text-align:center;top:810.70px;font-size:28px;line-height:28px;color:#101828;font-weight:400;letter-spacing:0px;-webkit-text-stroke:0.35px #101828;">$0</div>
<div class="b" style="left:2376px;top:468.5px;width:252px;height:252px;border-radius:50%;box-sizing:border-box;border:20px solid #e6ebf6"></div>
<div class="b" style="left:2492px;top:468.8px;width:20px;height:20px;border-radius:50%;background:#f9b81b"></div>
<div class="t" style="left:1902.00px;width:1200px;text-align:center;top:576.03px;font-size:38px;line-height:38px;color:#101828;font-weight:400;letter-spacing:-1.8px;">0%</div>
<div class="t" style="left:1902.00px;width:1200px;text-align:center;top:779.47px;font-size:20px;line-height:20px;color:#6b7385;font-weight:400;letter-spacing:-0.8px;">Won revenue</div>
<div class="t" style="left:1902.00px;width:1200px;text-align:center;top:810.70px;font-size:28px;line-height:28px;color:#101828;font-weight:400;letter-spacing:0px;-webkit-text-stroke:0.35px #101828;">$0</div>
<div class="b" style="left:0;top:0;width:2880px;height:1337px;overflow:hidden">
<div class="b" style="left:431px;top:912px;width:1158px;height:488px;background:#ffffff;border-radius:12px;box-shadow:0 4px 5px -2px rgba(40,60,80,0.07)"></div>
<div class="b" style="left:431px;top:996px;width:1158px;height:1.2000000000000455px;background:#eaecf0"></div>
<div class="t" style="left:461.50px;top:942.48px;font-size:24px;line-height:24px;color:#101828;font-weight:400;letter-spacing:0.8px;">Growth Scorecard</div>
<div class="b" style="left:1625px;top:912px;width:1158px;height:488px;background:#ffffff;border-radius:12px;box-shadow:0 4px 5px -2px rgba(40,60,80,0.07)"></div>
<div class="b" style="left:1625px;top:1008px;width:1158px;height:1.2000000000000455px;background:#eaecf0"></div>
<div class="t" style="left:1655.50px;top:948.08px;font-size:24px;line-height:24px;color:#101828;font-weight:400;letter-spacing:0.95px;">Stage Distribution</div>
<div class="b" style="left:2382px;top:930.5px;width:311px;height:59.5px;background:#fff;border:1.5px solid #d9d9d9;border-radius:10px;box-sizing:border-box"></div>
<div class="t" style="left:2399.30px;top:949.65px;font-size:22.5px;line-height:22.5px;color:#3d3d3d;font-weight:400;letter-spacing:-0.45px;">Client Project Tracker</div>
<svg class="b" style="left:2656px;top:954px" width="22" height="14" viewBox="0 0 22 14"><path d="M3 3 L10.5 10.5 L18 3" fill="none" stroke="#bdbdbd" stroke-width="1.6" stroke-linecap="round" stroke-linejoin="round"/></svg>
<svg class="b" style="left:2718px;top:951px" width="22" height="18" viewBox="0 0 22 18"><line x1="1" y1="5" x2="12.5" y2="5" stroke="#4b5860" stroke-width="1.8" stroke-linecap="round"/><circle cx="16" cy="4.4" r="3.1" fill="none" stroke="#4b5860" stroke-width="1.8"/><circle cx="4.2" cy="12.5" r="3.1" fill="none" stroke="#4b5860" stroke-width="1.8"/><line x1="7.5" y1="13" x2="20" y2="13" stroke="#4b5860" stroke-width="1.8" stroke-linecap="round"/></svg>
<div class="b" style="left:2177px;top:1322.7px;width:54px;height:54px;border-radius:50%;background:#eef2fc"></div>
<svg class="b" style="left:418px;top:988px" width="420" height="260" viewBox="0 0 420 260"><path d="M50.10 200.00 A159.9 159.9 0 0 1 57.93 150.59" fill="none" stroke="#d6d6d6" stroke-width="24.8"/><path d="M57.93 150.59 A159.9 159.9 0 0 1 210.00 40.10" fill="none" stroke="#dedede" stroke-width="24.8"/><path d="M210.00 40.10 A159.9 159.9 0 0 1 362.07 150.59" fill="none" stroke="#e5e5e5" stroke-width="24.8"/><path d="M362.07 150.59 A159.9 159.9 0 0 1 369.90 200.00" fill="none" stroke="#eeeeee" stroke-width="24.8"/><path d="M50.10 200.00 A159.9 159.9 0 0 1 362.07 150.59" fill="none" stroke="#ffb400" stroke-width="8"/></svg>
<div class="t" style="left:28.00px;width:1200px;text-align:center;top:1134.69px;font-size:17.5px;line-height:17.5px;color:#707070;font-weight:400;letter-spacing:-0.4px;">Brand &amp; Messaging</div>
<div class="t" style="left:28.00px;width:1200px;text-align:center;top:1154.80px;font-size:28px;line-height:28px;color:#262626;font-weight:400;letter-spacing:1.2px;">9.0</div>
<div class="t" style="left:-140.00px;width:1200px;text-align:center;top:1192.84px;font-size:12px;line-height:12px;color:#444;font-weight:400;letter-spacing:0px;">0</div>
<div class="t" style="left:194.00px;width:1200px;text-align:center;top:1192.84px;font-size:12px;line-height:12px;color:#444;font-weight:400;letter-spacing:0px;">10</div>
<svg class="b" style="left:800px;top:989px" width="420" height="260" viewBox="0 0 420 260"><path d="M50.10 200.00 A159.9 159.9 0 0 1 57.93 150.59" fill="none" stroke="#d6d6d6" stroke-width="24.8"/><path d="M57.93 150.59 A159.9 159.9 0 0 1 210.00 40.10" fill="none" stroke="#dedede" stroke-width="24.8"/><path d="M210.00 40.10 A159.9 159.9 0 0 1 362.07 150.59" fill="none" stroke="#e5e5e5" stroke-width="24.8"/><path d="M362.07 150.59 A159.9 159.9 0 0 1 369.90 200.00" fill="none" stroke="#eeeeee" stroke-width="24.8"/><path d="M50.10 200.00 A159.9 159.9 0 0 1 210.00 40.10" fill="none" stroke="#ffb400" stroke-width="8"/></svg>
<div class="t" style="left:410.00px;width:1200px;text-align:center;top:1136.19px;font-size:17.5px;line-height:17.5px;color:#707070;font-weight:400;letter-spacing:-0.05px;">Communication Strategy</div>
<div class="t" style="left:410.00px;width:1200px;text-align:center;top:1156.30px;font-size:28px;line-height:28px;color:#262626;font-weight:400;letter-spacing:1.2px;">5.0</div>
<div class="t" style="left:242.00px;width:1200px;text-align:center;top:1194.34px;font-size:12px;line-height:12px;color:#444;font-weight:400;letter-spacing:0px;">0</div>
<div class="t" style="left:576.00px;width:1200px;text-align:center;top:1194.34px;font-size:12px;line-height:12px;color:#444;font-weight:400;letter-spacing:0px;">10</div>
<svg class="b" style="left:1182px;top:990px" width="420" height="260" viewBox="0 0 420 260"><path d="M50.10 200.00 A159.9 159.9 0 0 1 57.93 150.59" fill="none" stroke="#d6d6d6" stroke-width="24.8"/><path d="M57.93 150.59 A159.9 159.9 0 0 1 210.00 40.10" fill="none" stroke="#dedede" stroke-width="24.8"/><path d="M210.00 40.10 A159.9 159.9 0 0 1 362.07 150.59" fill="none" stroke="#e5e5e5" stroke-width="24.8"/><path d="M362.07 150.59 A159.9 159.9 0 0 1 369.90 200.00" fill="none" stroke="#eeeeee" stroke-width="24.8"/><path d="M50.10 200.00 A159.9 159.9 0 0 1 210.00 40.10" fill="none" stroke="#ffb400" stroke-width="8"/></svg>
<div class="t" style="left:792.00px;width:1200px;text-align:center;top:1137.19px;font-size:17.5px;line-height:17.5px;color:#707070;font-weight:400;letter-spacing:0.0px;">Organic Marketing</div>
<div class="t" style="left:792.00px;width:1200px;text-align:center;top:1157.30px;font-size:28px;line-height:28px;color:#262626;font-weight:400;letter-spacing:1.2px;">5.0</div>
<div class="t" style="left:624.00px;width:1200px;text-align:center;top:1195.34px;font-size:12px;line-height:12px;color:#444;font-weight:400;letter-spacing:0px;">0</div>
<div class="t" style="left:958.00px;width:1200px;text-align:center;top:1195.34px;font-size:12px;line-height:12px;color:#444;font-weight:400;letter-spacing:0px;">10</div>
<svg class="b" style="left:608px;top:1224px" width="420" height="260" viewBox="0 0 420 260"><path d="M50.10 200.00 A159.9 159.9 0 0 1 57.93 150.59" fill="none" stroke="#d6d6d6" stroke-width="24.8"/><path d="M57.93 150.59 A159.9 159.9 0 0 1 210.00 40.10" fill="none" stroke="#dedede" stroke-width="24.8"/><path d="M210.00 40.10 A159.9 159.9 0 0 1 362.07 150.59" fill="none" stroke="#e5e5e5" stroke-width="24.8"/><path d="M362.07 150.59 A159.9 159.9 0 0 1 369.90 200.00" fill="none" stroke="#eeeeee" stroke-width="24.8"/><path d="M50.10 200.00 A159.9 159.9 0 0 1 362.07 150.59" fill="none" stroke="#ffb400" stroke-width="8"/></svg>
<svg class="b" style="left:990px;top:1221px" width="420" height="260" viewBox="0 0 420 260"><path d="M50.10 200.00 A159.9 159.9 0 0 1 57.93 150.59" fill="none" stroke="#d6d6d6" stroke-width="24.8"/><path d="M57.93 150.59 A159.9 159.9 0 0 1 210.00 40.10" fill="none" stroke="#dedede" stroke-width="24.8"/><path d="M210.00 40.10 A159.9 159.9 0 0 1 362.07 150.59" fill="none" stroke="#e5e5e5" stroke-width="24.8"/><path d="M362.07 150.59 A159.9 159.9 0 0 1 369.90 200.00" fill="none" stroke="#eeeeee" stroke-width="24.8"/><path d="M50.10 200.00 A159.9 159.9 0 0 1 160.59 47.93" fill="none" stroke="#ffb400" stroke-width="8"/></svg>
</div>
<div class="b" style="left:2385px;top:1169px;width:465px;height:150px;background:#fff;border-radius:16px;box-shadow:0 6px 30px rgba(30,41,59,0.14)"></div>
<div class="t" style="left:2407.70px;top:1196.95px;font-size:22.5px;line-height:22.5px;color:#111111;font-weight:700;letter-spacing:-0.35px;">Onboarding</div>
<div class="t" style="left:1952.00px;width:1200px;text-align:center;top:1198.22px;font-size:21px;line-height:21px;color:#111;font-weight:400;letter-spacing:0px;">&#127881;</div>
<div class="b" style="left:2407.7px;top:1238px;width:420.0px;height:11.5px;background:#f2f2f2;border-radius:6px"></div>
<div class="b" style="left:2407.7px;top:1238px;width:16.300000000000182px;height:11.5px;background:#f9b81b;border-radius:6px"></div>
<svg class="b" style="left:2408px;top:1270px" width="26" height="22" viewBox="0 0 26 22"><path d="M3 11 H22 M14 3.5 L22 11 L14 18.5" fill="none" stroke="#8a8a8a" stroke-width="2.2" stroke-linecap="round" stroke-linejoin="round"/></svg>
<div class="t" style="left:2442.00px;top:1268.81px;font-size:23.5px;line-height:23.5px;color:#8c8c8c;font-weight:400;letter-spacing:-0.53px;">Welcome &amp; Profile Setup</div>
<div class="b" style="left:2854px;top:119px;width:4px;height:482px;background:#e6e7f8;border-radius:2px"></div>
<div class="b" style="left:118.4px;top:464.4px;width:145.2px;height:145.2px;border-radius:50%;background:rgba(0,0,0,0.4)"></div>
<div class="b" style="left:156.5px;top:502.5px;width:69px;height:69px;border-radius:50%;background:#000"></div>
<div class="b" style="left:352px;top:504px;width:93px;height:45.5px;background:#4b5156;border-radius:6px"></div>
<svg class="b" style="left:342px;top:517px" width="12" height="20" viewBox="0 0 12 20"><path d="M11 0 L1 10 L11 20 Z" fill="#4b5156"/></svg>
<div class="t" style="left:-201.60px;width:1200px;text-align:center;top:519.53px;font-size:16.5px;line-height:16.5px;color:#ffffff;font-weight:400;letter-spacing:0.05px;-webkit-text-stroke:0.25px #fff;">Contacts</div>
</body></html>
